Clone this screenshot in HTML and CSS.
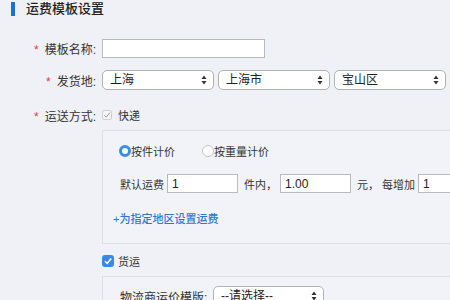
FILE: index.html
```html
<!DOCTYPE html>
<html>

<head>
    <title>运费模板设置</title>
    <link rel="stylesheet" href="styles.css">
</head>

<body>
    <div class="page-title">
        <span class="title-bar"></span>
        <h1>运费模板设置</h1>
    </div>

    <div class="form">
        <div class="form-row row-name">
            <label class="label"><i>*</i>模板名称:</label>
            <input type="text" class="text-input name-input" />
        </div>

        <div class="form-row row-from">
            <label class="label"><i>*</i>发货地:</label>
            <select class="select">
                <option>上海</option>
            </select>
            <select class="select">
                <option>上海市</option>
            </select>
            <select class="select">
                <option>宝山区</option>
            </select>
        </div>

        <div class="form-row row-way">
            <label class="label"><i>*</i>运送方式:</label>
            <span class="check check-disabled">
                <svg width="8" height="8" viewBox="0 0 8 8"><path d="M1.2 4.2 L3.2 6.2 L6.8 1.6" fill="none" stroke="#9a9a9a" stroke-width="1"/></svg>
            </span>
            <span class="check-text">快递</span>
        </div>

        <div class="panel panel-express">
            <div class="radio-row">
                <span class="radio radio-on"></span>
                <span class="radio-text">按件计价</span>
                <span class="radio"></span>
                <span class="radio-text">按重量计价</span>
            </div>
            <div class="fee-row">
                <span>默认运费</span>
                <input type="text" class="text-input fee-input" value="1" />
                <span>件内，</span>
                <input type="text" class="text-input fee-input" value="1.00" />
                <span>元，</span>
                <span>每增加</span>
                <input type="text" class="text-input fee-input" value="1" />
            </div>
            <a class="area-link" href="#">+为指定地区设置运费</a>
        </div>

        <div class="form-row row-freight">
            <span class="check check-on">
                <svg width="10" height="10" viewBox="0 0 10 10"><path d="M2 5.2 L4.2 7.4 L8.2 2.6" fill="none" stroke="#fff" stroke-width="1.6"/></svg>
            </span>
            <span class="check-text">货运</span>
        </div>

        <div class="panel panel-freight">
            <div class="freight-row">
                <span class="freight-label">物流商运价模版:</span>
                <select class="select freight-select">
                    <option>--请选择--</option>
                </select>
            </div>
        </div>
    </div>
</body>

</html>
```

FILE: styles.css
```css
html {
    overflow: hidden;
}

body {
    margin: 0;
    padding: 0;
    background-color: #eff1f7;
    font-family: "Liberation Sans", "Noto Sans CJK SC", sans-serif;
    font-size: 12px;
    color: #333;
    width: 450px;
    overflow: hidden;
}

.page-title {
    display: flex;
    align-items: center;
    height: 17px;
    padding-left: 11px;
}

.title-bar {
    width: 4px;
    height: 14px;
    background-color: #1f6fd1;
    margin-right: 11px;
}

.page-title h1 {
    margin: 0;
    font-size: 13px;
    font-weight: 500;
    color: #222;
    line-height: 16px;
}

.form {
    margin-top: 21px;
}

.form-row {
    display: flex;
    align-items: center;
}

.label {
    width: 96px;
    text-align: right;
    margin-right: 6px;
    flex-shrink: 0;
}

.label i {
    font-style: normal;
    color: #e4393c;
    margin-right: 6px;
}

.row-name {
    height: 20px;
}

.row-from {
    height: 20px;
    margin-top: 12px;
}

.row-way {
    height: 14px;
    margin-top: 18px;
}

.text-input {
    box-sizing: border-box;
    height: 19px;
    border: 1px solid #b9b9b9;
    background: #fff;
    padding: 0 4px;
    font-family: inherit;
    font-size: 12px;
    color: #222;
    outline: none;
}

.name-input {
    width: 163px;
}

.select {
    appearance: none;
    -webkit-appearance: none;
    box-sizing: border-box;
    width: 112px;
    height: 20px;
    margin-right: 4px;
    padding: 0 14px 0 7px;
    border: 1px solid #b3b3b3;
    border-radius: 5px;
    font-family: inherit;
    font-size: 12px;
    color: #222;
    background-color: #fff;
    background-image: url("data:image/svg+xml;utf8,<svg xmlns='http://www.w3.org/2000/svg' width='6' height='10'><path d='M3 0.5 L5.5 4 L0.5 4 Z M3 9.5 L5.5 6 L0.5 6 Z' fill='%23333'/></svg>");
    background-repeat: no-repeat;
    background-position: right 6px center;
}

.check {
    box-sizing: border-box;
    display: flex;
    align-items: center;
    justify-content: center;
    flex-shrink: 0;
}

.check-disabled {
    width: 10px;
    height: 10px;
    border: 1px solid #d0d0d0;
    border-radius: 2px;
    background: #f4f4f4;
}

.check-on {
    width: 12px;
    height: 12px;
    border-radius: 3px;
    background: #3b87e8;
}

.check-text {
    margin-left: 6px;
    font-size: 11px;
}

.panel {
    box-sizing: border-box;
    margin-left: 102px;
    width: 400px;
    border: 1px solid #dcdfe6;
    background-color: #f1f3f8;
    font-size: 11px;
}

.panel-express {
    margin-top: 8px;
    padding: 13px 0 17px 16px;
}

.radio-row {
    display: flex;
    align-items: center;
    height: 14px;
}

.radio {
    box-sizing: border-box;
    width: 12px;
    height: 12px;
    border-radius: 50%;
    border: 1px solid #c4c4c4;
    background: #fff;
}

.radio-on {
    border: 3.5px solid #3a8ee6;
    background: #fff;
}

.radio-text {
    margin-right: 27px;
}

.fee-row {
    display: flex;
    align-items: center;
    height: 19px;
    margin-top: 16px;
    margin-left: 1px;
    white-space: nowrap;
}

.fee-row span {
    margin-right: 3px;
}

.fee-input {
    width: 71px;
    margin-right: 6px;
}

.area-link {
    display: block;
    margin-top: 19px;
    margin-left: -6px;
    line-height: 14px;
    color: #2f78d2;
    text-decoration: none;
    font-weight: 500;
}

.row-freight {
    height: 14px;
    margin-top: 10px;
    padding-left: 102px;
}

.row-freight .check-text {
    margin-left: 4px;
}

.panel-freight {
    margin-top: 8px;
    padding: 9px 0 8px 17px;
    font-size: 12px;
}

.freight-row {
    display: flex;
    align-items: center;
}

.freight-label {
    width: 93px;
}

.freight-select {
    width: 111px;
}
```
